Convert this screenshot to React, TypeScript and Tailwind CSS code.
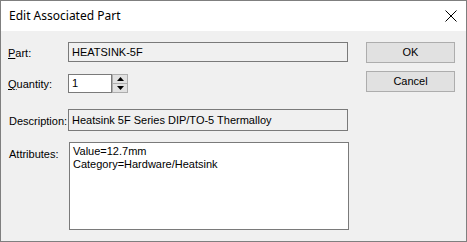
import React from 'react';

// Windows-style "Edit Associated Part" dialog
const ui = { fontFamily: '"Liberation Sans", Arial, sans-serif' };

function Field({ children, white = false, className = '' }: { children?: React.ReactNode; white?: boolean; className?: string }) {
  return (
    <div
      className={`shrink-0 border border-[#7a7a7a] ${white ? 'bg-white' : 'bg-[#f0f0f0]'} px-[3px] text-[11px] leading-[13px] text-black ${className}`}
    >
      {children}
    </div>
  );
}

function Spinner() {
  return (
    <div className="flex h-[19px] w-[16px] shrink-0 flex-col border border-[#adadad] bg-[#e1e1e1]">
      <div className="flex flex-1 items-center justify-center border-b border-[#adadad]">
        <svg width="7" height="4" viewBox="0 0 7 4"><path d="M3.5 0 L7 4 L0 4 Z" fill="#000" /></svg>
      </div>
      <div className="flex flex-1 items-center justify-center">
        <svg width="7" height="4" viewBox="0 0 7 4"><path d="M0 0 L7 0 L3.5 4 Z" fill="#000" /></svg>
      </div>
    </div>
  );
}

function Button({ label }: { label: string }) {
  return (
    <div className="flex h-[21px] w-[89px] items-center justify-center border border-[#adadad] bg-[#e1e1e1] text-[11px] text-black">
      {label}
    </div>
  );
}

export default function App() {
  return (
    <div className="flex h-[242px] w-[467px] flex-col border border-[#7f7f7f] bg-[#f0f0f0]" style={ui}>
      {/* Title bar */}
      <div className="flex h-[30px] items-center justify-between bg-white pl-[8px] pr-[8px]">
        <span className="text-[12px] text-black" style={{ fontFamily: '"Noto Sans", "Open Sans", sans-serif' }}>
          Edit Associated Part
        </span>
        <svg width="12" height="12" viewBox="0 0 12 12" className="mr-[1px]">
          <path d="M0.5 0.5 L11.5 11.5 M11.5 0.5 L0.5 11.5" stroke="#000" strokeWidth="1" />
        </svg>
      </div>

      {/* Body */}
      <div className="flex flex-1 pl-[7px] pt-[11px]">
        <div className="flex w-[341px] flex-col text-[11px] text-black">
          <div className="flex h-[20px] items-center">
            <span className="w-[60px] shrink-0 pt-[2px]"><u>P</u>art:</span>
            <Field className="flex h-[20px] w-[280px] items-center">HEATSINK-5F</Field>
          </div>
          <div className="mt-[12px] flex h-[19px] items-center">
            <span className="w-[60px] shrink-0 pt-[2px]"><u>Q</u>uantity:</span>
            <Field white className="flex h-[19px] w-[44px] items-center">1</Field>
            <Spinner />
          </div>
          <div className="mt-[16px] flex h-[22px] items-center">
            <span className="w-[60px] shrink-0 pl-[1px] pt-[2px]">Description:</span>
            <Field className="flex h-[22px] w-[280px] items-center">Heatsink 5F Series DIP/TO-5 Thermalloy</Field>
          </div>
          <div className="mt-[11px] flex">
            <span className="w-[61px] shrink-0 pl-[1px] pt-[4px]">Attributes:</span>
            <Field white className="h-[88px] w-[280px] pt-[2px]">
              <div>Value=12.7mm</div>
              <div>Category=Hardware/Heatsink</div>
            </Field>
          </div>
        </div>
        <div className="ml-[17px] flex flex-col gap-[8px]">
          <Button label="OK" />
          <Button label="Cancel" />
        </div>
      </div>
    </div>
  );
}
